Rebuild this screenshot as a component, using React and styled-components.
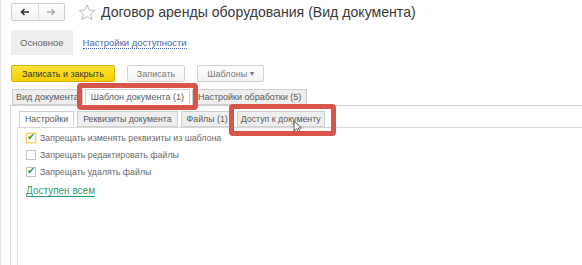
import styled, { createGlobalStyle } from "styled-components";

const GlobalStyle = createGlobalStyle`
  body {
    margin: 0;
    background: #fff;
    font-family: "Liberation Sans", Arial, sans-serif;
    color: #444;
  }
`;

const App = () => {
  return (
    <Page>
      <GlobalStyle />
      <Header>
        <NavGroup>
          <NavBtn>
            <svg width="10" height="8" viewBox="0 0 10 8">
              <path d="M9 4H2M4.5 1L1.5 4l3 3" stroke="#333" strokeWidth="1.6" fill="none" />
            </svg>
          </NavBtn>
          <NavBtn>
            <svg width="10" height="8" viewBox="0 0 10 8">
              <path d="M1 4h7M5.5 1l3 3-3 3" stroke="#aaa" strokeWidth="1.3" fill="none" />
            </svg>
          </NavBtn>
        </NavGroup>
        <Star width="18" height="17" viewBox="0 0 18 17">
          <path
            d="M9 1l2.3 5 5.4.5-4.1 3.6 1.2 5.3L9 12.7l-4.8 2.7 1.2-5.3L1.3 6.5 6.7 6z"
            fill="none"
            stroke="#bbb"
            strokeWidth="1"
          />
        </Star>
        <Title>Договор аренды оборудования (Вид документа)</Title>
      </Header>

      <SectionRow>
        <SectionTab>Основное</SectionTab>
        <SectionLink>Настройки доступности</SectionLink>
      </SectionRow>

      <Toolbar>
        <Button $primary>Записать и закрыть</Button>
        <Button>Записать</Button>
        <Button>
          Шаблоны <Caret>▾</Caret>
        </Button>
      </Toolbar>

      <OuterTabs>
        <Tab>Вид документа</Tab>
        <Highlight $pad="6px 6px 5px 8px">
          <Tab $active $wide>Шаблон документа (1)</Tab>
        </Highlight>
        <Tab $wide>Настройки обработки (5)</Tab>
      </OuterTabs>

      <OuterPanel>
        <InnerTabs>
          <Tab $active $inner>Настройки</Tab>
          <Tab $inner>Реквизиты документа</Tab>
          <Tab $inner>Файлы (1)</Tab>
          <Highlight $pad="7px 8px 9px 8px">
            <Tab $inner $tight>Доступ к документу</Tab>
            <Cursor width="10" height="13" viewBox="0 0 10 13">
              <path d="M1 1v10l2.5-2.3L5.3 12l1.6-.7-1.7-3.3H8.5z" fill="#fff" stroke="#333" strokeWidth="0.8" />
            </Cursor>
          </Highlight>
        </InnerTabs>

        <InnerPanel>
          <CheckRow>
            <Box $checked $focused />
            Запрещать изменять реквизиты из шаблона
          </CheckRow>
          <CheckRow>
            <Box />
            Запрещать редактировать файлы
          </CheckRow>
          <CheckRow>
            <Box $checked />
            Запрещать удалять файлы
          </CheckRow>
          <GreenLink>Доступен всем</GreenLink>
        </InnerPanel>
      </OuterPanel>
    </Page>
  );
};

const Page = styled.div`
  width: 582px;
  height: 265px;
  overflow: hidden;
  box-sizing: border-box;
  border-left: 1px solid #e4e4e4;
  padding-top: 3px;
`;

const Header = styled.div`
  display: flex;
  align-items: center;
  height: 18px;
  padding-left: 10px;
`;

const NavGroup = styled.div`
  display: flex;
  width: 54px;
  height: 18px;
  box-sizing: border-box;
  border: 1px solid #cfcfcf;
  border-radius: 2px;
  background: linear-gradient(#fff, #f1f1f1);
`;

const NavBtn = styled.div`
  flex: 1;
  display: flex;
  align-items: center;
  justify-content: center;
  & + & {
    border-left: 1px solid #dedede;
  }
`;

const Star = styled.svg`
  margin-left: 13px;
`;

const Title = styled.div`
  margin-left: 5px;
  font-size: 14.1px;
  color: #3a3a3a;
  white-space: nowrap;
`;

const SectionRow = styled.div`
  display: flex;
  align-items: center;
  margin-top: 9px;
  padding-left: 10px;
  height: 25px;
`;

const SectionTab = styled.div`
  height: 25px;
  display: flex;
  align-items: center;
  padding: 0 9px;
  background: #eeeeee;
  font-size: 9.5px;
  color: #666;
`;

const SectionLink = styled.span`
  margin-left: 10px;
  font-size: 9.5px;
  color: #4a67b5;
  border-bottom: 1px dotted #4a67b5;
  line-height: 11px;
`;

const Toolbar = styled.div`
  display: flex;
  gap: 12px;
  margin-top: 10px;
  padding-left: 10px;
`;

const Button = styled.div`
  height: 17px;
  box-sizing: border-box;
  display: flex;
  align-items: center;
  padding: 0 ${(p) => (p.$primary ? "10px" : "9px")};
  font-size: 9px;
  color: ${(p) => (p.$primary ? "#3a3a3a" : "#777")};
  background: ${(p) => (p.$primary ? "linear-gradient(#ffe338, #f3cf00)" : "linear-gradient(#fff, #f2f2f2)")};
  border: 1px solid ${(p) => (p.$primary ? "#d6b400" : "#d2d2d2")};
  border-radius: 2px;
`;

const Caret = styled.span`
  margin-left: 3px;
  font-size: 8px;
`;

const OuterTabs = styled.div`
  display: flex;
  align-items: flex-end;
  margin-top: 8px;
  padding-left: 11px;
  height: 15px;
`;

const Tab = styled.div`
  position: relative;
  height: 16px;
  box-sizing: border-box;
  display: flex;
  align-items: center;
  padding: 0 ${(p) => (p.$tight ? "3px" : p.$inner ? "5px" : p.$wide ? "5px" : "3px")};
  font-size: ${(p) => (p.$inner ? "8.8px" : "9px")};
  white-space: nowrap;
  color: #5a5a5a;
  background: ${(p) => (p.$active ? "#fff" : "#eeeeee")};
  border: 1px solid #d0d0d0;
  border-bottom: ${(p) => (p.$active ? "1px solid #fff" : "1px solid #d0d0d0")};
  margin-right: ${(p) => (p.$inner ? "3px" : "2px")};
`;

const Highlight = styled.div`
  position: relative;
  display: flex;
  align-items: flex-end;
  z-index: 2;
  &::after {
    content: "";
    position: absolute;
    inset: -${(p) => p.$pad.split(" ").join(" -")};
    border: 5px solid #d9544b;
    border-radius: 4px;
    pointer-events: none;
  }
`;

const Cursor = styled.svg`
  position: absolute;
  left: 56px;
  top: 9px;
`;

const OuterPanel = styled.div`
  margin-left: 9px;
  border-left: 1px solid #dcdcdc;
  border-top: 1px solid #d0d0d0;
  padding-left: 6px;
  height: 160px;
`;

const InnerTabs = styled.div`
  display: flex;
  align-items: flex-end;
  height: 21px;
  padding-left: 2px;
  border-bottom: 1px solid #d8d8d8;
`;

const InnerPanel = styled.div`
  border-left: 1px solid #dcdcdc;
  margin-top: -1px;
  padding: 2px 0 0 8px;
  height: 140px;
`;

const CheckRow = styled.div`
  display: flex;
  align-items: center;
  height: 17px;
  font-size: 8.8px;
  color: #6a6a6a;
`;

const Box = styled.span`
  width: 10px;
  height: 10px;
  box-sizing: border-box;
  margin-right: 4px;
  border: 1px solid ${(p) => (p.$focused ? "#f0d76a" : "#c4c4c4")};
  box-shadow: ${(p) => (p.$focused ? "0 0 0 1px #faeeb8" : "none")};
  background: #fff;
  position: relative;
  &::after {
    content: ${(p) => (p.$checked ? '"✔"' : '""')};
    position: absolute;
    left: 0px;
    top: -3px;
    font-size: 10px;
    color: #2f9a5a;
  }
`;

const GreenLink = styled.div`
  display: inline-block;
  margin-top: 2px;
  font-size: 10px;
  color: #2e9c72;
  border-bottom: 1px solid #2e9c72;
  line-height: 11px;
`;

export default App;
